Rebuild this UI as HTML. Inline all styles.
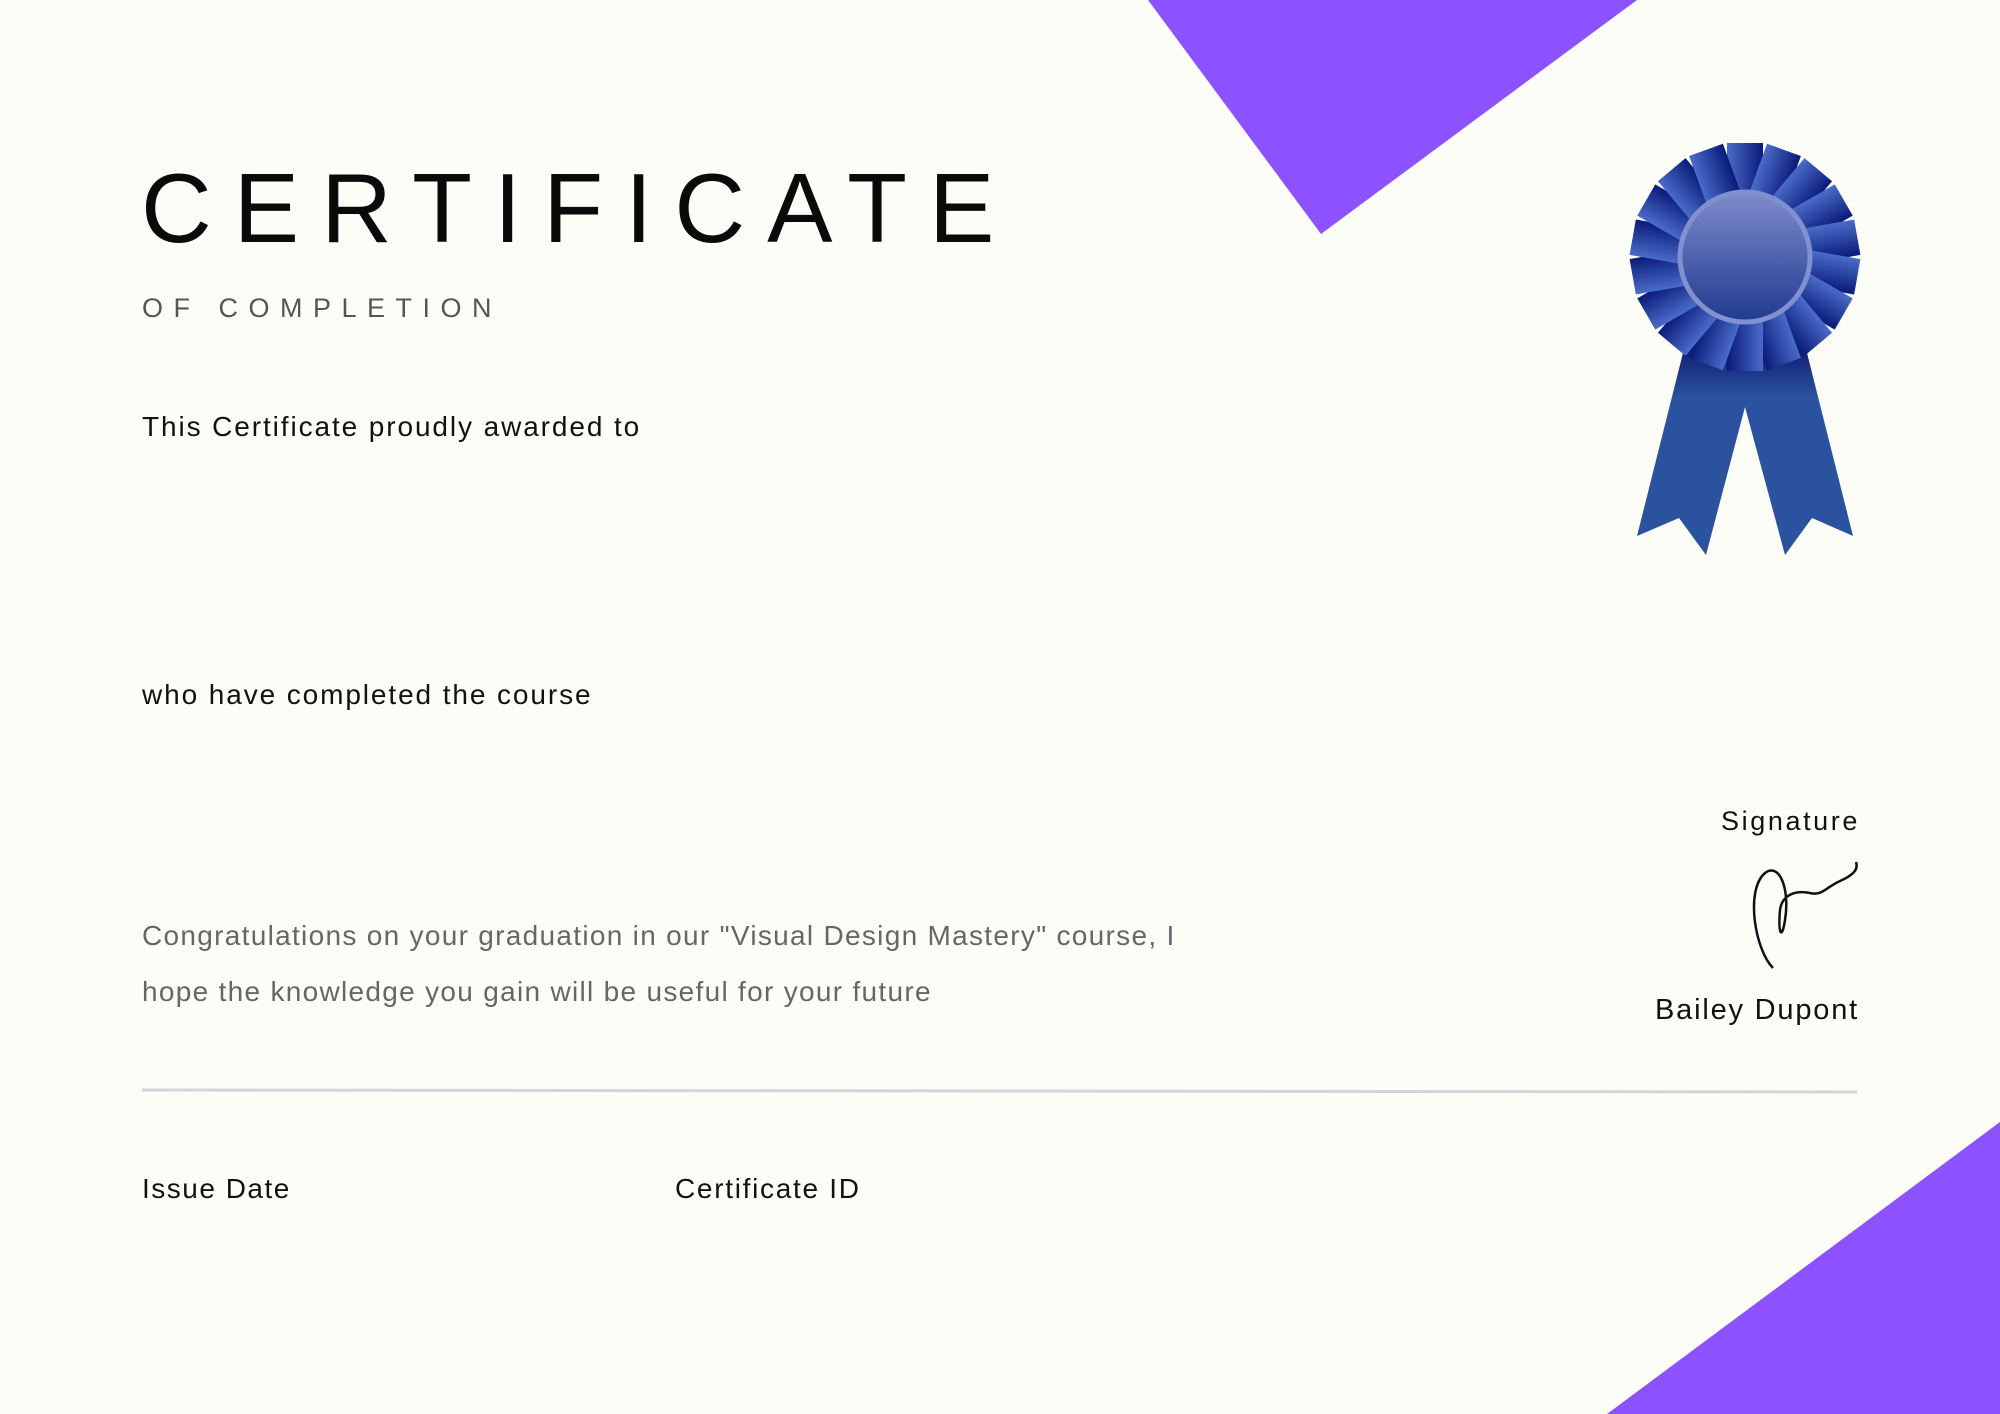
<!DOCTYPE html>
<html><head><meta charset="utf-8"><style>
html,body{margin:0;padding:0}
body{width:2000px;height:1414px;background:#fdfdf8;position:relative;overflow:hidden;font-family:"Liberation Sans",sans-serif;color:#111}
.t{position:absolute;white-space:nowrap}
</style></head><body>
<svg width="2000" height="1414" style="position:absolute;left:0;top:0">
<defs>
<linearGradient id="pet" x1="0" y1="0" x2="1" y2="0"><stop offset="0" stop-color="#4a6cc8"/><stop offset="1" stop-color="#0a1a7a"/></linearGradient>
<linearGradient id="inn" x1="0" y1="0" x2="0" y2="1"><stop offset="0" stop-color="#7f8ccc"/><stop offset="1" stop-color="#1f3a8f"/></linearGradient>
<linearGradient id="tail" x1="0" y1="0" x2="0" y2="1"><stop offset="0" stop-color="#0e1a70"/><stop offset="0.25" stop-color="#2a529e"/><stop offset="1" stop-color="#2a529e"/></linearGradient>
</defs>
<polygon points="1148,0 1637,0 1321,234" fill="#8c52ff"/>
<polygon points="2000,1122 2000,1414 1607,1414" fill="#8c52ff"/>
<polygon points="1685,345 1765,360 1745,407 1706,555 1679,518 1637,536" fill="url(#tail)"/>
<polygon points="1725,360 1805,345 1853,536 1812,518 1785,555 1745,407" fill="url(#tail)"/>
<circle cx="1745" cy="257" r="100" fill="#000860"/>
<g>
<rect x="1727" y="143" width="36" height="62" fill="url(#pet)" transform="rotate(0 1745 257)"/>
<rect x="1727" y="143" width="36" height="62" fill="url(#pet)" transform="rotate(20 1745 257)"/>
<rect x="1727" y="143" width="36" height="62" fill="url(#pet)" transform="rotate(40 1745 257)"/>
<rect x="1727" y="143" width="36" height="62" fill="url(#pet)" transform="rotate(60 1745 257)"/>
<rect x="1727" y="143" width="36" height="62" fill="url(#pet)" transform="rotate(80 1745 257)"/>
<rect x="1727" y="143" width="36" height="62" fill="url(#pet)" transform="rotate(100 1745 257)"/>
<rect x="1727" y="143" width="36" height="62" fill="url(#pet)" transform="rotate(120 1745 257)"/>
<rect x="1727" y="143" width="36" height="62" fill="url(#pet)" transform="rotate(140 1745 257)"/>
<rect x="1727" y="143" width="36" height="62" fill="url(#pet)" transform="rotate(160 1745 257)"/>
<rect x="1727" y="143" width="36" height="62" fill="url(#pet)" transform="rotate(180 1745 257)"/>
<rect x="1727" y="143" width="36" height="62" fill="url(#pet)" transform="rotate(200 1745 257)"/>
<rect x="1727" y="143" width="36" height="62" fill="url(#pet)" transform="rotate(220 1745 257)"/>
<rect x="1727" y="143" width="36" height="62" fill="url(#pet)" transform="rotate(240 1745 257)"/>
<rect x="1727" y="143" width="36" height="62" fill="url(#pet)" transform="rotate(260 1745 257)"/>
<rect x="1727" y="143" width="36" height="62" fill="url(#pet)" transform="rotate(280 1745 257)"/>
<rect x="1727" y="143" width="36" height="62" fill="url(#pet)" transform="rotate(300 1745 257)"/>
<rect x="1727" y="143" width="36" height="62" fill="url(#pet)" transform="rotate(320 1745 257)"/>
<rect x="1727" y="143" width="36" height="62" fill="url(#pet)" transform="rotate(340 1745 257)"/>
</g>
<circle cx="1745" cy="257" r="65" fill="url(#inn)" stroke="#8090d0" stroke-width="5"/>
<line x1="142" y1="1090" x2="1857" y2="1092" stroke="#d4d4dc" stroke-width="3"/>
<path d="M1773,968 C1755,950 1745,890 1765,873 C1780,862 1790,890 1785,920 C1782,940 1778,935 1780,910 C1782,895 1795,890 1810,893 C1822,896 1825,888 1840,881 C1856,874 1858,868 1856,862" fill="none" stroke="#111" stroke-width="2.5"/>
</svg>
<div class="t" style="left:141px;top:150px;font-size:98px;letter-spacing:22px;line-height:116px;color:#0a0a0a">CERTIFICATE</div>
<div class="t" style="left:142px;top:293px;font-size:27px;letter-spacing:10.5px;color:#555">OF COMPLETION</div>
<div class="t" style="left:142px;top:411px;font-size:28px;letter-spacing:1.9px">This Certificate proudly awarded to</div>
<div class="t" style="left:142px;top:679px;font-size:28px;letter-spacing:1.9px">who have completed the course</div>
<div class="t" style="left:142px;top:920px;font-size:28px;letter-spacing:1.3px;color:#666">Congratulations on your graduation in our "Visual Design Mastery" course, I</div>
<div class="t" style="left:142px;top:976px;font-size:28px;letter-spacing:1.3px;color:#666">hope the knowledge you gain will be useful for your future</div>
<div class="t" style="right:140px;top:806px;font-size:27px;letter-spacing:2.6px">Signature</div>
<div class="t" style="right:141px;top:994px;font-size:29px;letter-spacing:1.8px">Bailey Dupont</div>
<div class="t" style="left:142px;top:1173px;font-size:28px;letter-spacing:1.5px">Issue Date</div>
<div class="t" style="left:675px;top:1173px;font-size:28px;letter-spacing:1.7px">Certificate ID</div>
</body></html>
